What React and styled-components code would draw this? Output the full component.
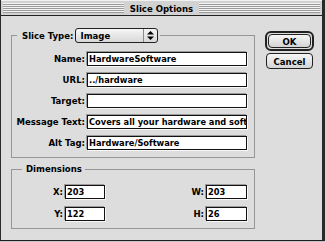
import React from 'react';
import styled, { createGlobalStyle } from 'styled-components';

const Global = createGlobalStyle`
  html, body { margin: 0; padding: 0; background: #c4c4c4; }
  body {
    font-family: "DejaVu Sans Condensed", "Liberation Sans", sans-serif;
    -webkit-font-smoothing: none;
  }
`;

const Window = styled.div`
  width: 325px;
  height: 241px;
  box-sizing: border-box;
  background: #dddddd;
  border-left: 1px solid #2a2a2a;
  border-right: 3px solid #2a2a2a;
  border-bottom: 1px solid #1e1e1e;
  display: flex;
  flex-direction: column;
  overflow: hidden;
`;

const TitleBar = styled.div`
  height: 14px;
  border-bottom: 1px solid #222;
  background: #d2d2d2;
  box-shadow: inset 0 1px 0 #f2f2f2;
  display: flex;
  align-items: center;
  gap: 2px;
  padding: 1px 2px 0 2px;
  box-sizing: content-box;
`;

const Stripes = styled.div`
  flex: 1;
  height: 10px;
  background: repeating-linear-gradient(to bottom, #f4f4f4 0 1px, #9c9c9c 1px 2px);
`;

const Title = styled.div`
  font-weight: bold;
  font-size: 9.5px;
  line-height: 13px;
  padding: 0 4px;
  color: #000;
`;

const Content = styled.div`
  display: flex;
  gap: 10px;
  padding: 12px 8px 0 10px;
`;

const MainColumn = styled.div`
  width: 246px;
  display: flex;
  flex-direction: column;
  gap: 4px;
`;

const Group = styled.fieldset`
  margin: 0;
  min-width: 0;
  box-sizing: border-box;
  border: 1px solid #969696;
  padding: 9px 7px 7px 0;
`;

const Legend = styled.legend`
  margin-left: ${p => p.$ml}px;
  padding: 0 ${p => p.$pr}px 0 ${p => p.$pl}px;
  display: flex;
  align-items: center;
  gap: 2px;
  font-weight: bold;
  font-size: 9.5px;
  line-height: 14px;
  color: #000;
`;

const Popup = styled.div`
  width: 83px;
  height: 15px;
  box-sizing: border-box;
  border: 1px solid #222;
  border-radius: 3px;
  background: linear-gradient(#f6f6f6, #d8d8d8);
  display: flex;
  align-items: stretch;
`;

const PopupText = styled.span`
  flex: 1;
  padding-left: 4px;
  line-height: 13px;
`;

const PopupArrow = styled.span`
  width: 13px;
  border-left: 1px solid #8a8a8a;
  display: flex;
  align-items: center;
  justify-content: center;
`;

const Rows = styled.div`
  display: flex;
  flex-direction: column;
  gap: 7px;
`;

const Row = styled.div`
  display: grid;
  grid-template-columns: 73px 1fr;
  column-gap: 2px;
  align-items: center;
`;

const Label = styled.div`
  text-align: right;
  font-weight: bold;
  font-size: 9.5px;
  line-height: 14px;
  color: #000;
  white-space: nowrap;
  width: ${p => (p.$w ? `${p.$w}px` : 'auto')};
`;

const Field = styled.div`
  height: 14px;
  box-sizing: border-box;
  width: ${p => (p.$w ? `${p.$w}px` : 'auto')};
  border: 1px solid #111;
  background: #fff;
  box-shadow: 1px 1px 0 #f8f8f8, -1px -1px 0 #9a9a9a;
  padding-left: 1px;
  font-weight: bold;
  font-size: 9.2px;
  line-height: 12px;
  color: #000;
  white-space: nowrap;
  overflow: hidden;
`;

const DimGrid = styled.div`
  display: grid;
  grid-template-columns: 1fr 1fr;
  row-gap: 8px;
`;

const DimField = styled.div`
  display: flex;
  align-items: center;
  gap: 2px;
  justify-self: ${p => (p.$end ? 'end' : 'start')};
`;

const ButtonColumn = styled.div`
  display: flex;
  flex-direction: column;
  align-items: center;
  gap: 2px;
  margin-top: 3px;
  width: 49px;
`;

const DefaultRing = styled.div`
  border: 2px solid #222;
  border-radius: 6px;
  padding: 1px;
  background: #dddddd;
`;

const Button = styled.div`
  width: ${p => p.$w}px;
  height: ${p => p.$h}px;
  box-sizing: border-box;
  border: 1px solid #222;
  border-radius: 4px;
  background: linear-gradient(#f6f6f6, #d4d4d4);
  display: flex;
  align-items: center;
  justify-content: center;
  font-weight: bold;
  font-size: 9.5px;
  color: #000;
`;

const UpDown = () => (
  <svg width="7" height="9" viewBox="0 0 7 9">
    <path d="M3.5 0 L7 3.5 L0 3.5 Z" fill="#000" />
    <path d="M0 5.5 L7 5.5 L3.5 9 Z" fill="#000" />
  </svg>
);

const rows = [
  ['Name:', 'HardwareSoftware'],
  ['URL:', '../hardware'],
  ['Target:', ''],
  ['Message Text:', 'Covers all your hardware and software needs'],
  ['Alt Tag:', 'Hardware/Software'],
];

export default function App() {
  return (
    <>
      <Global />
      <Window>
        <TitleBar>
          <Stripes />
          <Title>Slice Options</Title>
          <Stripes />
        </TitleBar>
        <Content>
          <MainColumn>
            <Group>
              <Legend $ml={5} $pl={5} $pr={2}>
                <span>Slice Type:</span>
                <Popup>
                  <PopupText>Image</PopupText>
                  <PopupArrow><UpDown /></PopupArrow>
                </Popup>
              </Legend>
              <Rows>
                {rows.map(([label, value]) => (
                  <Row key={label}>
                    <Label>{label}</Label>
                    <Field>{value}</Field>
                  </Row>
                ))}
              </Rows>
            </Group>
            <Group>
              <Legend $ml={10} $pl={4} $pr={3}>Dimensions</Legend>
              <DimGrid>
                <DimField>
                  <Label $w={51}>X:</Label>
                  <Field $w={40}>203</Field>
                </DimField>
                <DimField $end>
                  <Label>W:</Label>
                  <Field $w={41}>203</Field>
                </DimField>
                <DimField>
                  <Label $w={51}>Y:</Label>
                  <Field $w={40}>122</Field>
                </DimField>
                <DimField $end>
                  <Label>H:</Label>
                  <Field $w={41}>26</Field>
                </DimField>
              </DimGrid>
            </Group>
          </MainColumn>
          <ButtonColumn>
            <DefaultRing>
              <Button $w={43} $h={14}>OK</Button>
            </DefaultRing>
            <Button $w={47} $h={16}>Cancel</Button>
          </ButtonColumn>
        </Content>
      </Window>
    </>
  );
}
